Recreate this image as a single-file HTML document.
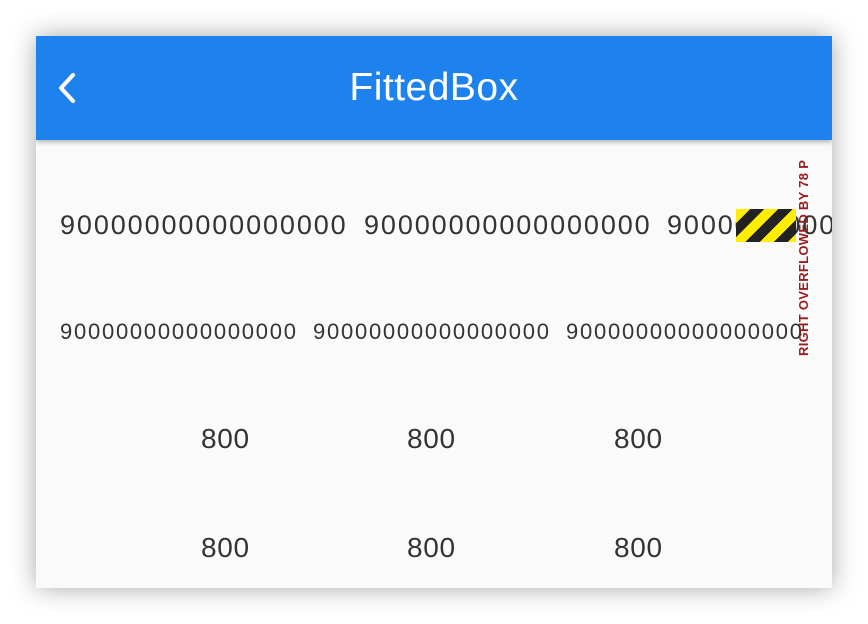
<!DOCTYPE html>
<html><head><style>
body{margin:0;width:868px;height:624px;background:#fff;position:relative;overflow:hidden;font-family:"Liberation Sans",sans-serif}
.screen{position:absolute;left:36px;top:36px;width:796px;height:552px;background:#fafafa;overflow:hidden;box-shadow:0 0 24px rgba(0,0,0,.35)}
.bar{position:absolute;left:0;top:0;width:796px;height:104px;background:#1e82ee;box-shadow:0 2px 5px rgba(0,0,0,.3)}
.title{position:absolute;left:0;width:796px;top:30px;text-align:center;color:#fff;font-size:39px;line-height:44px;letter-spacing:.5px}
.t{position:absolute;color:#333;white-space:nowrap;line-height:1}
.r1{font-size:27px;letter-spacing:1.9px;top:176px}
.r2{font-size:22px;letter-spacing:1.75px;top:285px}
.r3{font-size:28px;letter-spacing:.7px}
</style></head><body>
<div class="screen">
<div class="bar">
<svg style="position:absolute;left:16px;top:30px" width="30" height="44" viewBox="0 0 30 44"><path d="M21 9 L9 22 L21 35" stroke="#fff" stroke-width="4" fill="none" stroke-linecap="round" stroke-linejoin="round"/></svg>
<div class="title">FittedBox</div>
</div>
<div class="t r1" style="left:24px">90000000000000000</div>
<div class="t r1" style="left:328px">90000000000000000</div>
<div class="t r1" style="left:631px">90000000000000000</div>
<div style="position:absolute;left:700px;top:173px;width:60px;height:33px;background:repeating-linear-gradient(135deg,#ffee00 0 10px,#222 10px 20px)"></div>
<div class="t r2" style="left:24px">90000000000000000</div>
<div class="t r2" style="left:277px">90000000000000000</div>
<div class="t r2" style="left:530px">90000000000000000</div>
<div style="position:absolute;left:761px;top:320px;transform:rotate(-90deg);transform-origin:0 0;color:#9b1c1c;font-weight:bold;font-size:13px;letter-spacing:.3px;white-space:nowrap;line-height:14px">RIGHT OVERFLOWED BY 78 P</div>
<div class="t r3" style="left:165px;top:389px">800</div>
<div class="t r3" style="left:371px;top:389px">800</div>
<div class="t r3" style="left:578px;top:389px">800</div>
<div class="t r3" style="left:165px;top:498px">800</div>
<div class="t r3" style="left:371px;top:498px">800</div>
<div class="t r3" style="left:578px;top:498px">800</div>
</div>
</body></html>
